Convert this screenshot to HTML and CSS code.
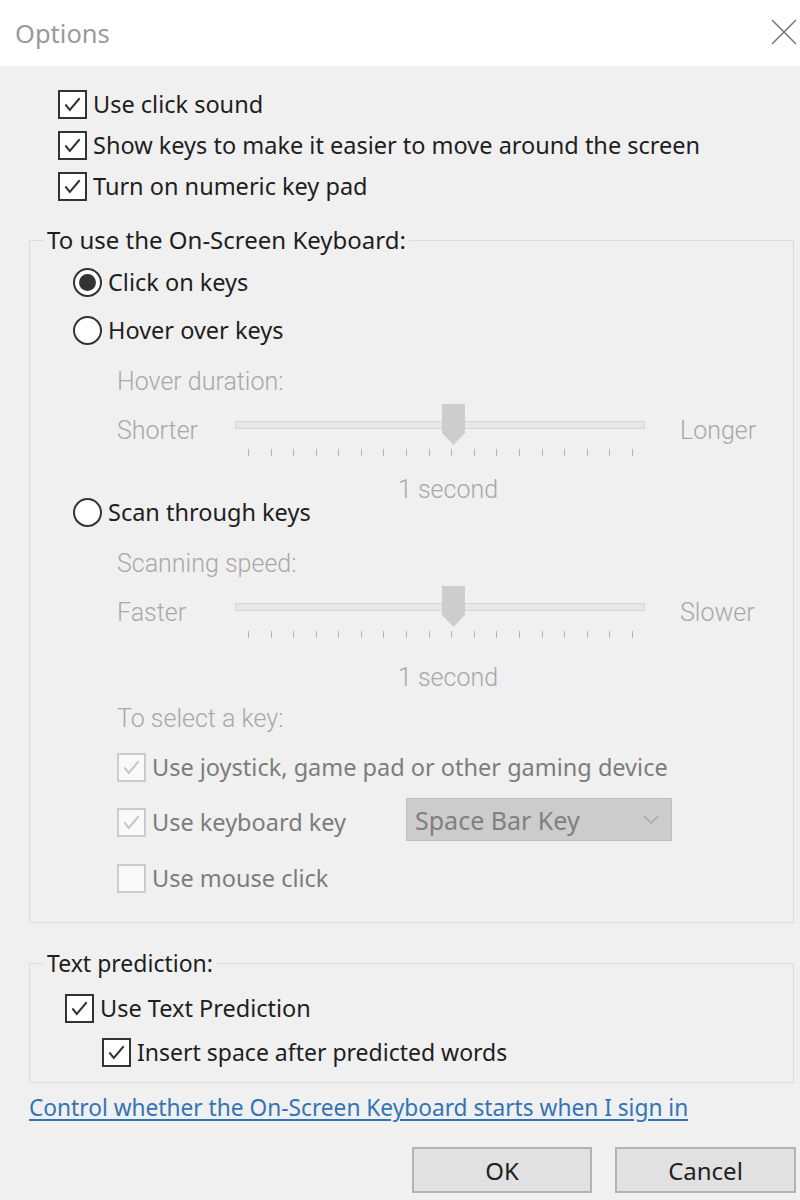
FILE: index.html
```html
<!DOCTYPE html>
<html lang="en">
<head>
<meta charset="utf-8">
<title>Options</title>
<link rel="stylesheet" href="styles.css">
</head>
<body>
<div class="dialog">
  <header class="titlebar">
    <span class="title">Options</span>
    <svg class="close" width="26" height="26" viewBox="0 0 26 26"><path d="M1 1 L25 25 M25 1 L1 25" stroke="#7a7a7a" stroke-width="1.6" fill="none"/></svg>
  </header>

  <div class="top-checks">
    <label class="row check-row r-first"><span class="cb"><svg viewBox="0 0 28 28"><path d="M6 14 L11 20 L22 7" /></svg></span><span>Use click sound</span></label>
    <label class="row check-row r-next"><span class="cb"><svg viewBox="0 0 28 28"><path d="M6 14 L11 20 L22 7" /></svg></span><span>Show keys to make it easier to move around the screen</span></label>
    <label class="row check-row r-next"><span class="cb"><svg viewBox="0 0 28 28"><path d="M6 14 L11 20 L22 7" /></svg></span><span>Turn on numeric key pad</span></label>
  </div>

  <fieldset class="group group-osk">
    <legend>To use the On-Screen Keyboard:</legend>
    <label class="row radio-row m14"><span class="radio checked"></span><span>Click on keys</span></label>
    <label class="row radio-row m20"><span class="radio"></span><span>Hover over keys</span></label>
    <div class="row sub dim m24">Hover duration:</div>
    <div class="slider-row m6">
      <span class="dim lbl-left">Shorter</span>
      <div class="slider">
        <div class="track"></div>
        <svg class="thumb" viewBox="0 0 23 41"><polygon points="0,0 23,0 23,29 11.5,41 0,29" /></svg>
        <div class="ticks"><i></i><i></i><i></i><i></i><i></i><i></i><i></i><i></i><i></i><i></i><i></i><i></i><i></i><i></i><i></i><i></i><i></i><i></i></div>
      </div>
      <span class="dim lbl-right">Longer</span>
    </div>
    <div class="value dim m24">1 second</div>
    <label class="row radio-row"><span class="radio"></span><span>Scan through keys</span></label>
    <div class="row sub dim m24">Scanning speed:</div>
    <div class="slider-row m6">
      <span class="dim lbl-left">Faster</span>
      <div class="slider">
        <div class="track"></div>
        <svg class="thumb" viewBox="0 0 23 41"><polygon points="0,0 23,0 23,29 11.5,41 0,29" /></svg>
        <div class="ticks"><i></i><i></i><i></i><i></i><i></i><i></i><i></i><i></i><i></i><i></i><i></i><i></i><i></i><i></i><i></i><i></i><i></i><i></i></div>
      </div>
      <span class="dim lbl-right">Slower</span>
    </div>
    <div class="value dim m30">1 second</div>
    <div class="row sub dim m19">To select a key:</div>
    <label class="row check-row sub disabled m20"><span class="cb"><svg viewBox="0 0 28 28"><path d="M6 14 L11 20 L22 7" /></svg></span><span>Use joystick, game pad or other gaming device</span></label>
    <div class="row check-row sub disabled m27">
      <span class="cb"><svg viewBox="0 0 28 28"><path d="M6 14 L11 20 L22 7" /></svg></span><span class="kb-label">Use keyboard key</span>
      <div class="select"><span>Space Bar Key</span><svg width="16" height="10" viewBox="0 0 16 10"><path d="M1 1 L8 8 L15 1" /></svg></div>
    </div>
    <label class="row check-row sub disabled m28"><span class="cb empty"></span><span>Use mouse click</span></label>
  </fieldset>

  <fieldset class="group group-pred">
    <legend>Text prediction:</legend>
    <label class="row check-row pred1"><span class="cb"><svg viewBox="0 0 28 28"><path d="M6 14 L11 20 L22 7" /></svg></span><span>Use Text Prediction</span></label>
    <label class="row check-row pred2"><span class="cb"><svg viewBox="0 0 28 28"><path d="M6 14 L11 20 L22 7" /></svg></span><span>Insert space after predicted words</span></label>
  </fieldset>

  <a class="link" href="#">Control whether the On-Screen Keyboard starts when I sign in</a>

  <div class="buttons">
    <button class="btn btn-ok">OK</button>
    <button class="btn btn-cancel">Cancel</button>
  </div>
</div>
</body>
</html>
```

FILE: styles.css
```css
* { box-sizing: border-box; }
html, body { margin: 0; padding: 0; }
body {
  width: 800px;
  height: 1200px;
  background: #f0f0f0;
  font-family: "Noto Sans", "Open Sans", sans-serif;
  font-size: 23.5px;
  color: #1e1e1e;
  overflow: hidden;
}
.dialog { display: flex; flex-direction: column; }

.titlebar {
  height: 66px;
  background: #fff;
  display: flex;
  align-items: center;
  justify-content: space-between;
  padding: 0 3px 0 15px;
}
.title { color: #9a9a9a; font-size: 25.5px; margin-top: -1px; }
.close { margin-top: -2px; }

.row { display: flex; align-items: center; height: 28px; line-height: 28px; white-space: nowrap; }
.check-row { gap: 6px; }
.radio-row { gap: 6px; margin-left: 43px; }

.top-checks { padding-left: 58px; display: flex; flex-direction: column; }
.r-first { margin-top: 24px; }
.r-next { margin-top: 13px; }

.cb {
  width: 29px; height: 29px; flex: none;
  border: 2px solid #333;
  background: #fff;
  display: flex; align-items: center; justify-content: center;
}
.cb svg { width: 25px; height: 25px; }
.cb path { fill: none; stroke: #333; stroke-width: 2.2; }
.disabled .cb { border-color: #cbcbcb; background: #f9f9f9; }
.disabled .cb path { stroke: #c6c6c6; }
.disabled { color: #7c7c7c; }

.radio {
  width: 29px; height: 29px; flex: none;
  border-radius: 50%;
  border: 2px solid #333;
  background: #fff;
  display: flex; align-items: center; justify-content: center;
}
.radio.checked::after {
  content: "";
  width: 17px; height: 17px; border-radius: 50%;
  background: #333;
}

.group {
  margin: 0 6px 0 29px;
  padding: 0;
  border: 1px solid #dcdcdc;
  display: flex; flex-direction: column;
  min-width: 0;
}
.group legend {
  margin-left: 14px;
  padding: 0 3px;
  height: 28px; line-height: 28px;
}
.group-osk legend { font-size: 24px; }
.group-pred legend { font-size: 23px; }
.group-osk { margin-top: 26px; padding-bottom: 30px; }
.group-pred { margin-top: 26px; padding-bottom: 16px; }

.sub { margin-left: 87px; }
.dim {
  font-family: "Roboto", "Liberation Sans", sans-serif;
  font-weight: 300;
  color: #a8a8a8;
  font-size: 25px;
}
.m6 { margin-top: 6px; }
.m14 { margin-top: 14px; }
.m19 { margin-top: 19px; }
.m20 { margin-top: 20px; }
.m24 { margin-top: 24px; }
.m27 { margin-top: 27px; }
.m28 { margin-top: 28px; }
.m30 { margin-top: 30px; }

.slider-row {
  display: flex; align-items: center;
  height: 56px;
  margin-left: 87px;
}
.lbl-left { width: 118px; flex: none; }
.lbl-right { margin-left: 35px; }
.slider { position: relative; width: 410px; height: 56px; flex: none; }
.track {
  position: absolute; left: 0; right: 0; top: 19px; height: 8px;
  background: #e7e7e7; border: 1px solid #d4d4d4;
}
.thumb { position: absolute; left: 207px; top: 2px; width: 23px; height: 41px; }
.thumb polygon { fill: #cdcdcd; }
.ticks {
  position: absolute; left: 13px; right: 12px; top: 47px; height: 7px;
  display: flex; justify-content: space-between;
}
.ticks i { width: 1px; height: 7px; background: #b4b4b4; }

.value {
  height: 16px; line-height: 16px;
  margin-left: 205px; width: 410px;
  text-align: center; padding-left: 16px;
}

.kb-label { width: 248px; flex: none; }
.select {
  width: 266px; height: 43px; flex: none;
  background: #cccccc; border: 1px solid #c0c0c0;
  display: flex; align-items: center; justify-content: space-between;
  padding: 0 12px 0 8px;
  color: #808080;
  font-size: 25px;
  margin-top: -5px;
}
.select path { fill: none; stroke: #a6a6a6; stroke-width: 1.4; }

.pred1 { margin-top: 17px; margin-left: 35px; }
.pred2 { margin-top: 16px; margin-left: 72px; }
.pred2 span:last-child { font-size: 23px; }

.link {
  margin: 11px 0 0 29px;
  height: 28px; line-height: 28px;
  font-size: 22.7px;
  color: #3374b5;
  text-decoration: underline;
  text-underline-offset: 3px;
  align-self: flex-start;
  white-space: nowrap;
}

.buttons {
  display: flex; justify-content: flex-end; gap: 23px;
  margin-top: 25px; padding-right: 4px;
}
.btn {
  height: 46px;
  background: #e1e1e1;
  border: 2px solid #b3b3b3;
  font-family: "Noto Sans", "Open Sans", sans-serif;
  font-size: 24px;
  color: #222;
  padding: 0;
}
.btn-ok { width: 180px; }
.btn-cancel { width: 181px; }
```
